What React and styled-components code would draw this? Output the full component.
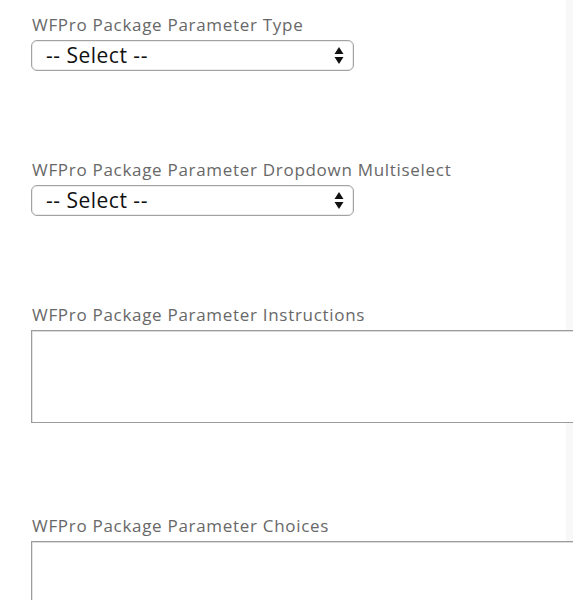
import React from "react";
import styled, { createGlobalStyle } from "styled-components";

const GlobalStyle = createGlobalStyle`
  html, body {
    margin: 0;
    padding: 0;
    overflow: hidden;
    background: linear-gradient(to right, #ffffff 566px, #f8f8f8 566px);
  }
  body {
    font-family: "Open Sans", Lato, "Liberation Sans", sans-serif;
  }
`;

const ArrowsIcon = () => (
  <svg width="10" height="17" viewBox="0 0 10 17">
    <path d="M5 0 L9.5 7 L0.5 7 Z" fill="#111" />
    <path d="M0.5 10 L9.5 10 L5 17 Z" fill="#111" />
  </svg>
);

const SelectField = ({ label, space }) => (
  <Field $space={space}>
    <Label>{label}</Label>
    <SelectBox>
      <SelectText>-- Select --</SelectText>
      <ArrowsIcon />
    </SelectBox>
  </Field>
);

const TextField = ({ label, space }) => (
  <Field $space={space}>
    <Label>{label}</Label>
    <TextArea />
  </Field>
);

const App = () => {
  return (
    <Page>
      <GlobalStyle />
      <SelectField label="WFPro Package Parameter Type" space={89} />
      <SelectField label="WFPro Package Parameter Dropdown Multiselect" space={89} />
      <TextField label="WFPro Package Parameter Instructions" space={93} />
      <TextField label="WFPro Package Parameter Choices" space={0} />
    </Page>
  );
};

export default App;

const Page = styled.div`
  display: flex;
  flex-direction: column;
  padding: 15px 0 0 31px;
  width: 560px;
`;

const Field = styled.div`
  display: flex;
  flex-direction: column;
  gap: 5px;
  margin-bottom: ${({ $space }) => $space}px;
`;

const Label = styled.div`
  font-size: 17px;
  line-height: 20px;
  letter-spacing: 0.7px;
  color: #686868;
  padding-left: 1px;
  white-space: nowrap;
`;

const SelectBox = styled.div`
  box-sizing: border-box;
  width: 323px;
  height: 31px;
  display: flex;
  align-items: center;
  justify-content: space-between;
  padding: 0 9px 0 14px;
  border: 1px solid #a2a2a2;
  border-radius: 6px;
  box-shadow: inset 0 0 0 1px #ececec;
  background: #ffffff;
`;

const SelectText = styled.span`
  font-size: 21px;
  letter-spacing: 0.5px;
  color: #111111;
  line-height: 1;
`;

const TextArea = styled.div`
  box-sizing: border-box;
  width: 560px;
  height: 93px;
  border: 1px solid #9c9c9c;
  box-shadow: inset 0 1px 0 #dcdcdc, inset 1px 0 0 #e4e4e4;
  background: #ffffff;
`;
